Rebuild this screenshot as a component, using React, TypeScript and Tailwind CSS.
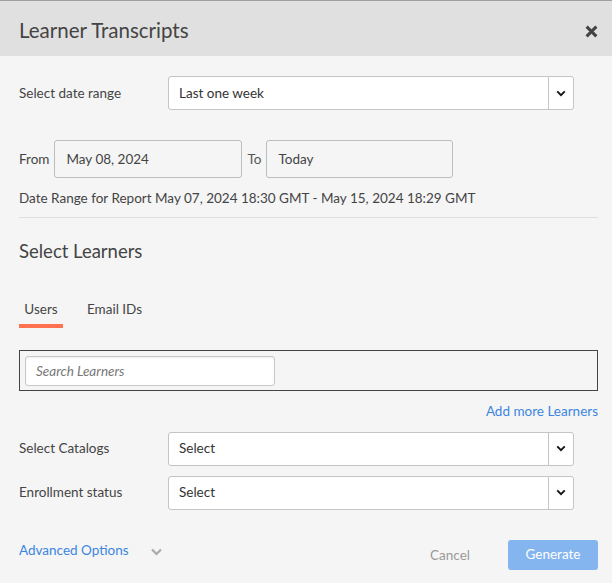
import React, { useState } from "react";

const font = { fontFamily: "Lato, 'Noto Sans', sans-serif" };

function Chevron({ className }: { className?: string }) {
  return (
    <svg viewBox="0 0 12 8" className={className} fill="none">
      <path d="M1.5 1.5 L6 6 L10.5 1.5" stroke="currentColor" strokeWidth="2.2" />
    </svg>
  );
}

function SelectBox({ value }: { value: string }) {
  return (
    <div className="flex h-[34px] w-[406px] items-stretch rounded-[3px] border border-[#c4c4c4] bg-white">
      <div className="flex flex-1 items-center px-[10px] text-[13.5px] text-[#333]">{value}</div>
      <div className="flex w-[25px] items-center justify-center border-l border-[#c4c4c4]">
        <Chevron className="h-[7px] w-[10px] text-[#111]" />
      </div>
    </div>
  );
}

export default function App() {
  const [tab, setTab] = useState("users");

  return (
    <div className="h-[583px] w-[612px] overflow-hidden border-t border-[#a0a0a0] bg-[#f5f5f5] text-[13.5px]" style={font}>
      {/* header */}
      <div className="flex h-[55px] items-center justify-between bg-[#e0e0e0] pl-[19px] pr-[14px] pt-[3px]">
        <h1 className="text-[20.5px] text-[#444]">Learner Transcripts</h1>
        <svg viewBox="0 0 12 12" className="mt-[3px] h-[13px] w-[13px] text-[#444]">
          <path d="M1.5 1.5 L10.5 10.5 M10.5 1.5 L1.5 10.5" stroke="currentColor" strokeWidth="2.8" />
        </svg>
      </div>

      <div className="pl-[19px] pr-[14px] pt-[20px]">
        {/* date range */}
        <div className="flex items-center">
          <label className="w-[149px] text-[#444]">Select date range</label>
          <SelectBox value="Last one week" />
        </div>

        <div className="mt-[30px] flex items-center">
          <span className="mr-[5px] text-[#444]">From</span>
          <div className="flex h-[38px] w-[188px] items-center rounded-[3px] border border-[#bdbdbd] px-[11px] text-[#444]">
            May 08, 2024
          </div>
          <span className="mx-[5px] text-[#555]">To</span>
          <div className="flex h-[38px] w-[187px] items-center rounded-[3px] border border-[#bdbdbd] px-[11px] text-[#444]">
            Today
          </div>
        </div>

        <p className="mt-[10px] text-[#444]">
          Date Range for Report May 07, 2024 18:30 GMT - May 15, 2024 18:29 GMT
        </p>

        <div className="mt-[9px] border-t border-[#dedede]" />

        {/* learners */}
        <h2 className="mt-[20px] text-[18.5px] text-[#444]">Select Learners</h2>

        <div className="mt-[33px] flex gap-[24px] text-[#444]">
          <button
            onClick={() => setTab("users")}
            className={`w-[44px] pb-[5px] text-center border-b-4 ${tab === "users" ? "border-[#ff714f]" : "border-transparent"}`}
          >
            Users
          </button>
          <button
            onClick={() => setTab("emails")}
            className={`pb-[5px] border-b-4 ${tab === "emails" ? "border-[#ff714f]" : "border-transparent"}`}
          >
            Email IDs
          </button>
        </div>

        <div className="mt-[22px] flex h-[41px] items-center border border-[#444] px-[5px]">
          <input
            placeholder="Search Learners"
            className="h-[30px] w-[250px] rounded-[3px] border border-[#c8c8c8] bg-white px-[10px] italic text-[#444] shadow-[inset_0_1px_2px_rgba(0,0,0,0.08)] outline-none placeholder:text-[#777]"
          />
        </div>

        <div className="mt-[10px] flex justify-end">
          <a className="text-[#3b86e0]">Add more Learners</a>
        </div>

        <div className="mt-[10px] flex items-center">
          <label className="w-[149px] text-[#444]">Select Catalogs</label>
          <SelectBox value="Select" />
        </div>
        <div className="mt-[10px] flex items-center">
          <label className="w-[149px] text-[#444]">Enrollment status</label>
          <SelectBox value="Select" />
        </div>

        {/* footer */}
        <div className="mt-[30px] flex items-center justify-between">
          <div className="-mt-[8px] flex items-center gap-[21px]">
            <a className="text-[#3b86e0]">Advanced Options</a>
            <Chevron className="mt-[2px] h-[8px] w-[13px] text-[#aaa]" />
          </div>
          <div className="flex items-center gap-[38px]">
            <button className="mt-[2px] text-[#9a9a9a]">Cancel</button>
            <button className="h-[30px] w-[90px] rounded-[3px] bg-[#84b5ef] text-white">
              Generate
            </button>
          </div>
        </div>
      </div>
    </div>
  );
}
